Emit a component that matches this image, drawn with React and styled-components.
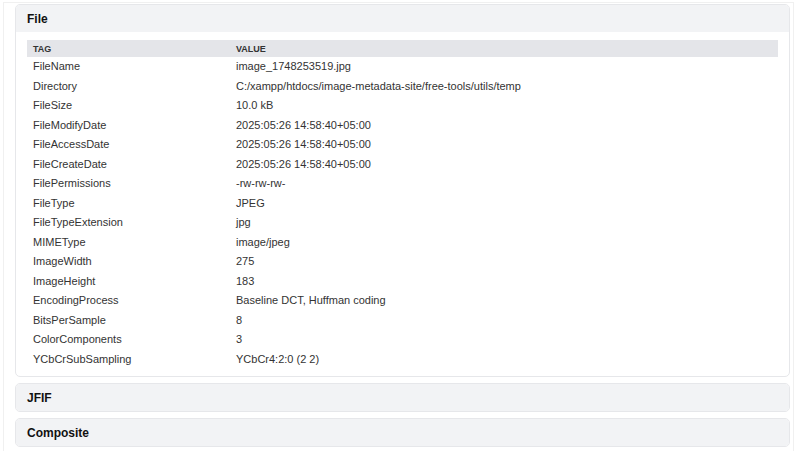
import React from 'react';
import styled, { createGlobalStyle } from 'styled-components';

const GlobalStyle = createGlobalStyle`
  body {
    margin: 0;
    background: #ffffff;
    font-family: "Liberation Sans", Arial, sans-serif;
  }
`;

const Frame = styled.div`
  margin: 2px 6px 0 3px;
  border-top: 1px solid #f0f0f0;
  border-left: 1px solid #f0f0f0;
  border-right: 1px solid #f0f0f0;
  padding: 1px 3px 0 11px;
  height: 449px;
  box-sizing: border-box;
  display: flex;
  flex-direction: column;
  gap: 6px;
`;

const Section = styled.div`
  border: 1px solid #e6e7ea;
  border-radius: 5px;
  background: #ffffff;
  overflow: hidden;
`;

const SectionHeader = styled.div`
  height: 27px;
  display: flex;
  align-items: center;
  padding: 0 11px;
  background: #f2f3f5;
  font-size: 12px;
  font-weight: bold;
  color: #111;
`;

const SectionBody = styled.div`
  padding: 8px 11px 7px;
`;

const Table = styled.table`
  width: 100%;
  border-collapse: collapse;
  font-size: 11px;
  color: #333;
`;

const HeadCell = styled.th`
  background: #e4e5e9;
  text-align: left;
  font-size: 9px;
  font-weight: bold;
  text-transform: uppercase;
  color: #333;
  height: 17px;
  padding: 0 6px;
  line-height: 10px;
  width: ${(p) => p.$width || 'auto'};
`;

const Cell = styled.td`
  padding: 3px 6px;
  line-height: 13.5px;
  white-space: nowrap;
`;

const rows = [
  ['FileName', 'image_1748253519.jpg'],
  ['Directory', 'C:/xampp/htdocs/image-metadata-site/free-tools/utils/temp'],
  ['FileSize', '10.0 kB'],
  ['FileModifyDate', '2025:05:26 14:58:40+05:00'],
  ['FileAccessDate', '2025:05:26 14:58:40+05:00'],
  ['FileCreateDate', '2025:05:26 14:58:40+05:00'],
  ['FilePermissions', '-rw-rw-rw-'],
  ['FileType', 'JPEG'],
  ['FileTypeExtension', 'jpg'],
  ['MIMEType', 'image/jpeg'],
  ['ImageWidth', '275'],
  ['ImageHeight', '183'],
  ['EncodingProcess', 'Baseline DCT, Huffman coding'],
  ['BitsPerSample', '8'],
  ['ColorComponents', '3'],
  ['YCbCrSubSampling', 'YCbCr4:2:0 (2 2)'],
];

const App = () => {
  return (
    <>
      <GlobalStyle />
      <Frame>
        <Section>
          <SectionHeader>File</SectionHeader>
          <SectionBody>
            <Table>
              <thead>
                <tr>
                  <HeadCell $width="191px">Tag</HeadCell>
                  <HeadCell>Value</HeadCell>
                </tr>
              </thead>
              <tbody>
                {rows.map(([tag, value]) => (
                  <tr key={tag}>
                    <Cell>{tag}</Cell>
                    <Cell>{value}</Cell>
                  </tr>
                ))}
              </tbody>
            </Table>
          </SectionBody>
        </Section>
        <Section>
          <SectionHeader>JFIF</SectionHeader>
        </Section>
        <Section>
          <SectionHeader>Composite</SectionHeader>
        </Section>
      </Frame>
    </>
  );
};

export default App;
